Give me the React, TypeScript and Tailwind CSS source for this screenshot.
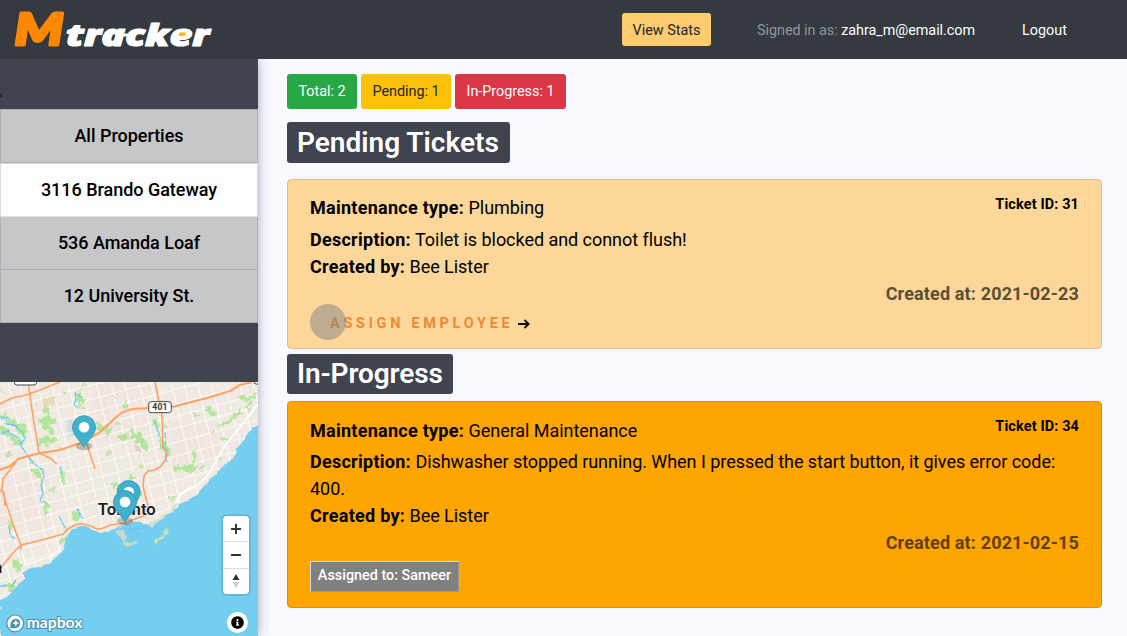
import React from "react";
import { FaInfoCircle } from "react-icons/fa";

const properties = [
  { name: "All Properties", box: "h-[54px] bg-[#c6c7c9] border-[#aeafb2]" },
  { name: "3116 Brando Gateway", box: "h-[54px] bg-[#fdfdfd] border-[#dcdcde]" },
  { name: "536 Amanda Loaf", box: "h-[53px] border-t-0 bg-[#c6c7c9] border-[#aeafb2]" },
  { name: "12 University St.", box: "h-[53px] border-t-0 bg-[#c6c7c9] border-[#aeafb2]" },
];

// Street grid: long avenues rising to the east and streets running north to south.
const avenues = [-8, 6, 19, 34, 46, 58, 72, 86, 98, 110, 124, 137, 150, 163, 178, 192, 206, 222, 240, 256];
const streets = [-68, -52, -38, -23, -9, 8, 19, 37, 51, 68, 80, 96, 111, 124, 139, 151, 171, 184, 197, 211, 225, 239, 253];

const parks = [
  "M2 31l8 3 6 7 7 1 5 8-3 6-6-4-5-8-8-4-6-2z",
  "M0 43l6 2 7 8 7 4 3 8-8-3-6-7-9-5z",
  "M46 33l9 5-2 4-4 3 6 3-3 4-8-5-5-7z",
  "M38 58l7-4 9 1 5 4-8 3-9 1-8 2z",
  "M76 9l6-1-1 7 5 3-3 5-7-3zM82 0l6 2-3 4-4-1z",
  "M96 41l8 1 6 4-3 3-10-1zM105 53l4-7 3-1-2 9z",
  "M119 52l8-1 3 5-7 3-5-3zM130 45l4 5 8 3 8 13-5 4-5-8-7-5-3-7z",
  "M153 35l5 4 1 6-2 3-4-7zM158 50l3 4 3 8 5 4 1 8-5-1-4-12z",
  "M173 85l8-2 4 1 9-2 3 4-6 6-4-3-5 1-8-1zM193 68l3 2-1 11-3 1z",
  "M205 24l6 3 6 6-2 2-8-5zM218 42l7-1 9-8 6-6 3 3-7 6-9 6-5 3-6-1z",
  "M238 13l9 2 10-5 1 2-9 6-10-1zM249 19l4 2-4 8-3-2z",
  "M32 85l8 5 4 9-2 1-6-8-6-3zM47 108l6-4 3 3-5 5-1-1z",
  "M45 119l4 1-1 12-3 2-3-6zM72 130l7-1 1 6-3 5-5-4z",
  "M61 88l3 4 1 11-2 1-4-10zM13 178l5-1 4 9-5 4-5-7z",
  "M7 202l9 0-3 6-6 1zM40 184l6-1 3 2-7 3z",
  "M113 101l7-1 1 4-6 3-3-3zM128 93l7-1-1 4-6 2z",
  "M135 108l6 1 1 5-4 2zM61 157l6-1-3 4-5 2z",
  "M6 72l4-2 3 3-6 2zM42 24l7 3 2 5-4 2-4-6z",
  "M9 138l4 2-1 9-3-2zM200 83l4 0-1 4-4 1z",
  "M123 22l4-3 0 6-4 2zM224 55l5 1-2 3-5-1z",
  "M226 85l8-7 1 2-6 6zM170 116l6-2-3 4-4 2z",
];

function Marker({ x, y }: { x: number; y: number }) {
  return (
    <g transform={`translate(${x} ${y})`}>
      <ellipse cx="0" cy="19" rx="8" ry="4" fill="#000" opacity=".22" />
      <path d="M0 20C-3 14-11.5 8-11.5 0a11.5 11.5 0 0 1 23 0C11.5 8 3 14 0 20z" fill="#3fb1ce" stroke="#2f98b4" strokeWidth=".8" />
      <circle r="5.3" fill="#fff" />
    </g>
  );
}

function TorontoMap() {
  return (
    <svg viewBox="0 0 258 254" className="block h-full w-full overflow-hidden" fontFamily="Roboto, sans-serif">
      <defs>
        <filter id="rough" x="-5%" y="-5%" width="110%" height="110%">
          <feTurbulence type="fractalNoise" baseFrequency=".22" numOctaves="2" seed="4" />
          <feDisplacementMap in="SourceGraphic" scale="9" xChannelSelector="R" yChannelSelector="G" />
        </filter>
        <filter id="shore" x="-5%" y="-5%" width="110%" height="110%">
          <feTurbulence type="fractalNoise" baseFrequency=".2" numOctaves="2" seed="9" />
          <feDisplacementMap in="SourceGraphic" scale="3" xChannelSelector="R" yChannelSelector="G" />
        </filter>
      </defs>
      <rect width="258" height="254" fill="#efe9e1" />
      <path d="M90 0h60v60H90zM170 40h50v50h-50zM0 90h50v60H0z" fill="#f0e5df" />
      <path d="M42 16l14-3-1 10-12 2z" fill="#e4dcb9" />
      <path d="M66 39l6-2 2 16-5 3-2-9z" fill="#d5d9e4" />
      <g fill="none" stroke="#fff" strokeWidth=".8">
        {avenues.map((y) => (
          <path key={y} d={`M0 ${y + 36}L258 ${y - 34}`} />
        ))}
        {streets.map((x) => (
          <path key={x} d={`M${x} 0l58 240`} />
        ))}
      </g>
      <g fill="none" stroke="#f6f2ed" strokeWidth=".5">
        {streets.map((x) => (
          <path key={x} d={`M${x + 7} 0l58 240`} />
        ))}
      </g>
      <g filter="url(#rough)">
        <g fill="#b4e59c">
          {parks.map((d) => (
            <path key={d} d={d} />
          ))}
        </g>
        <g fill="#c3e0a4" opacity=".8">
          {parks.map((d, i) => (
            <rect key={d} x={(i * 53) % 236} y={8 + ((i * 31) % 84)} width={3 + (i % 3)} height="3" />
          ))}
        </g>
      </g>
      <path d="M134 62l6 3 2 6-6-2z" fill="#e5cfd3" />
      <g fill="none" stroke="#68cbef" strokeWidth="1.3" strokeLinejoin="round" filter="url(#shore)">
        <path d="M0 34l6 3 1 5 7 1 4 4 5 3 2 7-5 5 4 6 3 5 4 5 6 6 6 4 1 8-3 7 2 9-2 6 7 4" />
        <path d="M0 52l8-3 5 4 6 3 3 6" />
        <path d="M75 10l1 7-2 6 6 3M78 12l3 5M154 39l3 7 2 8M165 51l1 9-4 4 5 4-2 7 2 5M9 144l1 8 5 5M61 85l2 8" />
        <path d="M59 134l4 8 4 6M78 127l2 7 4 3M0 204h6M16 198l-5 7" />
      </g>
      <path
        filter="url(#shore)"
        d="M270 32L258 42L248 51L246 56L237 66L236 72L230 79L225 83L217 91L210 98L203 105L197 112L190 118L179 122L178 125L170 131L164 134L156 138L148 143L137 139L130 141L125 143L115 147L100 151L93 148L83 143L72 147L67 155L62 170L56 175L50 181L40 185L30 186L24 190L24 198L18 202L15 206L7 215L0 218V264H270Z"
        fill="#73cef0"
      />
      <path d="M258 22L248 35L237 49L226 62L217 77L209 92L198 103L188 107L180 113L176 121" fill="none" stroke="#fff" strokeWidth="1.6" />
      <path d="M21 163L25 183L52 174L60 166" fill="none" stroke="#fff" strokeWidth="1.2" />
      <g fill="none" stroke="#ffa163" strokeWidth="1.6" strokeLinejoin="round">
        <path d="M0 22l12-6 14-3 14-5L60 0M28 0l5 34 6 37 11 5 7 6M87 62l8 25" />
        <path d="M155 0l7 34 1 30 4 8-1 5-5 7-6 4-7 1-4 5-1 10 5 20-4 8" />
        <path d="M18 77L10 88L3 97L2 107L7 124L15 148L21 163V168M0 108l4 3 1 13" />
        <path d="M0 187L13 171L21 163L42 158L63 152Q73 141 83 142Q90 143 97 147Q103 147 110 143L125 141L140 135L149 132" />
      </g>
      <path d="M0 88l10-4 8-7 22-6 20-3 23-8 16-9 12-11q11-12 22-13l17-1 22-1 35-9 23-7 10-6 12-3" fill="none" stroke="#ffa163" strokeWidth="2.1" />
      <g filter="url(#shore)">
        <path d="M115 149l9-2 2 9-3 5-3-6z" fill="#c9d7dd" />
        <path fill="#c5e2b4" d="M123 159l5 2 7-2 3 2-6 2-4 2-4-2zM154 159l9-6 2 3-6 2-3 5zM163 150l4-5 2 7-4 1z" />
        <path fill="#d9e3cb" d="M149 143l10-7 8-6-3 6-8 5-4 5zM170 129l4-8 3 2-4 8z" />
      </g>
      <path d="M126 141l7 15M126 141l10 10 10 5M126 141l-10 5M132 148l15-3" fill="none" stroke="#68bee1" strokeWidth=".7" />
      <g stroke="#454545" strokeWidth="1" fill="#fff">
        <rect x="14.5" y="-8" width="22" height="11" rx="2.5" />
        <rect x="254" y="-8" width="12" height="10" rx="2.5" />
        <rect x="148.7" y="19.7" width="22.6" height="11" rx="2.5" />
      </g>
      <text x="160" y="28.4" fontSize="8.5" fontWeight="700" textAnchor="middle" letterSpacing=".3" fill="#333">401</text>
      <Marker x={128.7} y={110} />
      <text x="97.8" y="133.3" fontSize="16" fontWeight="600" textLength="58" lengthAdjust="spacingAndGlyphs" fill="#1c1c1c" stroke="#fff" strokeWidth="1.2" paintOrder="stroke">Toronto</text>
      <text x="-6.5" y="191" fontSize="16" fontWeight="700" fill="#111">a</text>
      <Marker x={84} y={45.2} />
      <Marker x={125} y={120} />
      <g transform="translate(15.2 241.4)">
        <circle r="8.4" fill="#fff" fillOpacity=".95" stroke="#4f91ad" strokeWidth="1.2" />
        <path d="M-4.8 4.8C-5.5-.8-3.2-4.6.8-4.7A4.5 4.5 0 0 1 4.9-.5C4.9 3.7 1 5.5-4.8 4.8z" fill="#4a90ad" />
        <path d="M.6-3.6L1.7-1.3 4 -.2 1.7.9.6 3.2-.5.9-2.8-.2-.5-1.3z" fill="#fff" />
      </g>
      <text x="26.8" y="245.6" fontFamily="Lato, sans-serif" fontSize="15.5" fontWeight="700" textLength="55.5" lengthAdjust="spacingAndGlyphs" fill="#fff" stroke="#4a90ad" strokeWidth="2" strokeLinejoin="round" paintOrder="stroke">mapbox</text>
    </svg>
  );
}

function MapControls() {
  return (
    <div className="absolute top-[134px] left-[223px] flex h-[78px] w-[26px] flex-col overflow-hidden rounded bg-white shadow-[0_0_0_2px_rgba(0,0,0,0.1)]">
      <div className="flex flex-1 items-center justify-center border-b border-[#ddd]">
        <svg width="12" height="12" viewBox="0 0 12 12" fill="none" stroke="#333" strokeWidth="2" strokeLinecap="round"><path d="M1.7 6h8.6M6 1.7v8.6" /></svg>
      </div>
      <div className="flex flex-1 items-center justify-center border-b border-[#ddd]">
        <svg width="12" height="12" viewBox="0 0 12 12" fill="none" stroke="#333" strokeWidth="2" strokeLinecap="round"><path d="M1.7 6h8.6" /></svg>
      </div>
      <div className="flex flex-1 items-center justify-center">
        <svg width="8" height="16" viewBox="0 0 8 16"><path d="M.5 7L4 1l3.5 6z" fill="#333" /><path d="M.5 9L4 15l3.5-6z" fill="#ccc" /></svg>
      </div>
    </div>
  );
}

function Logo() {
  return (
    <svg width="212" height="59" viewBox="0 0 212 59" className="block" strokeLinejoin="round" fontStyle="italic">
      <text x="14.8" y="44.6" fontFamily="Lato, sans-serif" fontWeight="900" fontSize="43.5" textLength="48.5" lengthAdjust="spacingAndGlyphs" fill="#ff8800" stroke="#ff8800" strokeWidth="3.2">M</text>
      <text x="66" y="45.6" fontFamily="'Open Sans', sans-serif" fontWeight="800" fontSize="30.5" textLength="143.5" lengthAdjust="spacingAndGlyphs" fill="#fff" stroke="#fff" strokeWidth="1.2">tracker</text>
      <path d="M122 33.5h11v3h-11z" fill="#fff" />
      <path d="M179.5 32.5h6.5l-1 3.3h-6.5z" fill="#ffb900" />
    </svg>
  );
}

function Row({ label, children }: { label: string; children: React.ReactNode }) {
  return (
    <p className="leading-[27px] tracking-[-0.045px]">
      <span className="font-bold tracking-[0.27px]">{label}</span> {children}
    </p>
  );
}

export default function App() {
  return (
    <div className="flex h-[636px] w-[1127px] flex-col overflow-hidden bg-[#f8f9ff] font-['Roboto',sans-serif] text-black">
      <header className="z-10 flex h-[59px] shrink-0 items-center bg-[#343a40] text-[14.4px] text-white">
        <Logo />
        <button className="ml-[410px] h-[33px] w-[89px] rounded-[3px] bg-[#ffcb6f] pt-[2px] text-[#212529]">View Stats</button>
        <p className="ml-[46px] w-[218px] pt-[2px] tracking-[-0.04px] whitespace-nowrap text-[#939699]">
          Signed in as: <span className="text-white">zahra_m@email.com</span>
        </p>
        <a className="ml-[47px] pt-[2px]">Logout</a>
      </header>
      <div className="flex min-h-0 flex-1">
        <aside className="flex w-[258px] shrink-0 flex-col bg-[#40444f] shadow-[0_0_10px_rgba(60,60,90,0.45)]">
          <div className="flex h-[50px] items-end pb-[12px]">
            <span className="h-[3px] w-[2px] bg-[#25272d]" />
          </div>
          <nav>
            {properties.map((p) => (
              <div key={p.name} className={`flex items-center justify-center border pb-[2px] text-[18px] font-medium tracking-[-0.03px] ${p.box}`}>
                {p.name}
              </div>
            ))}
          </nav>
          <div className="relative mt-auto h-[254px]">
            <TorontoMap />
            <MapControls />
            <div className="absolute top-[230px] left-[227px] flex size-[21px] items-center justify-center rounded-full bg-white">
              <FaInfoCircle size={13} color="#000" />
            </div>
          </div>
        </aside>
        <main className="flex flex-1 flex-col items-start pt-[15px] pr-[25px] pl-[29px]">
          <div className="flex gap-1 text-[14.4px] tracking-[-0.03px] text-white">
            <span className="flex h-[35px] w-[70px] items-center justify-center rounded-[3px] bg-[#28a745]">Total: 2</span>
            <span className="flex h-[35px] w-[90px] items-center justify-center rounded-[3px] bg-[#ffc107] text-[#212529]">Pending: 1</span>
            <span className="flex h-[35px] w-[111px] items-center justify-center rounded-[3px] bg-[#dc3545]">In-Progress: 1</span>
          </div>
          <h2 className="mt-[13px] flex h-[41px] w-[223px] items-center rounded-[3px] bg-[#40444f] pl-[10px] text-[28px] font-semibold text-white">Pending Tickets</h2>
          <section className="relative mt-[16px] h-[170px] w-full rounded border border-[#dfbf88] bg-[#fcd799] px-[22px] pt-[14px] text-[18px]">
            <div className="flex items-start justify-between">
              <Row label="Maintenance type:">Plumbing</Row>
              <span className="mt-[1px] text-[14.4px] leading-[20px] font-bold tracking-[0.15px]">Ticket ID: 31</span>
            </div>
            <div className="mt-[5px]"><Row label="Description:">Toilet is blocked and connot flush!</Row></div>
            <Row label="Created by:">Bee Lister</Row>
            <p className="text-right leading-[27px] font-bold tracking-[0.15px] text-[#5b4e37]">Created at: 2021-02-23</p>
            <div className="mt-[6px] flex items-center pl-5 text-[14.4px] leading-[22px] font-bold text-[#ed8936]">
              <span className="tracking-[3.75px]">ASSIGN EMPLOYEE</span>
              <svg className="ml-[5px]" width="12" height="10" viewBox="0 0 12 10" fill="none" stroke="#111" strokeWidth="1.9"><path d="M0 5h10.5M6.5 1l4.2 4-4.2 4" /></svg>
            </div>
            <span className="absolute top-[124px] left-[22px] size-9 rounded-full bg-[#7f8488]/50" />
          </section>
          <h2 className="mt-[5px] flex h-[40px] w-[166px] items-center rounded-[3px] bg-[#40444f] pl-[10px] text-[28px] font-semibold tracking-[-0.12px] text-white">In-Progress</h2>
          <section className="mt-[7px] h-[207px] w-full rounded border border-[#de9000] bg-[#ffa500] px-[22px] pt-[15px] text-[18px]">
            <div className="flex items-start justify-between">
              <Row label="Maintenance type:">General Maintenance</Row>
              <span className="text-[14.4px] leading-[20px] font-bold tracking-[0.15px]">Ticket ID: 34</span>
            </div>
            <div className="mt-[4px]">
              <Row label="Description:">Dishwasher stopped running. When I pressed the start button, it gives error code: 400.</Row>
            </div>
            <Row label="Created by:">Bee Lister</Row>
            <p className="text-right leading-[27px] font-bold tracking-[0.15px] text-[#5e410e]">Created at: 2021-02-15</p>
            <div className="mt-[5px] flex h-[31px] w-[149px] items-center justify-center border border-t-[#ddd] border-r-[#999] border-b-[#999] border-l-[#ddd] bg-[#808080] pb-[2px] text-[14.4px] font-medium text-white">Assigned to: Sameer</div>
          </section>
        </main>
      </div>
    </div>
  );
}
